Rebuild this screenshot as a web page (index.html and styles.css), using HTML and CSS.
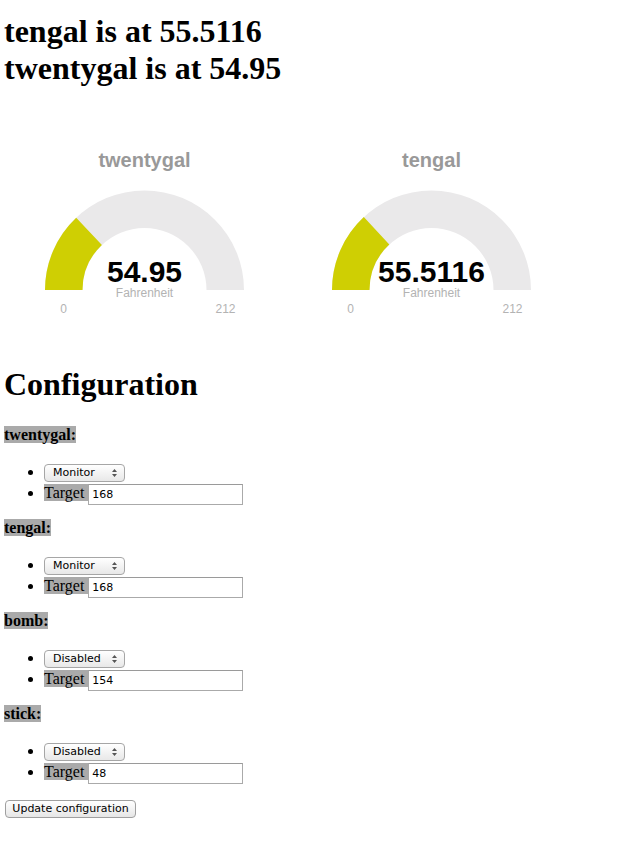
FILE: index.html
```html
<!DOCTYPE html>
<html>
<head>
<meta charset="utf-8">
<title>Temperatures</title>
<link rel="stylesheet" href="styles.css">
</head>
<body>
<div class="page">
  <h1 class="status">tengal is at 55.5116<br>twentygal is at 54.95</h1>

  <div class="gauges">
    <div class="gauge">
      <svg width="272" height="200" viewBox="0 0 272 200">
        <text class="g-title" x="136.5" y="37" text-anchor="middle">twentygal</text>
        <path class="g-back" d="M37 160 A99.5 99.5 0 0 1 236 160 L198.5 160 A62 62 0 0 0 74.5 160 Z"/>
        <path class="g-level" d="M37 160 A99.5 99.5 0 0 1 68.2 87.7 L93.9 114.9 A62 62 0 0 0 74.5 160 Z"/>
        <text class="g-value" x="136.5" y="152" text-anchor="middle">54.95</text>
        <text class="g-label" x="136.5" y="167" text-anchor="middle">Fahrenheit</text>
        <text class="g-minmax" x="55.5" y="183" text-anchor="middle">0</text>
        <text class="g-minmax" x="217.5" y="183" text-anchor="middle">212</text>
      </svg>
    </div>
    <div class="gauge">
      <svg width="272" height="200" viewBox="0 0 272 200">
        <text class="g-title" x="136.5" y="37" text-anchor="middle">tengal</text>
        <path class="g-back" d="M37 160 A99.5 99.5 0 0 1 236 160 L198.5 160 A62 62 0 0 0 74.5 160 Z"/>
        <path class="g-level" d="M37 160 A99.5 99.5 0 0 1 68.8 87.1 L94.3 114.6 A62 62 0 0 0 74.5 160 Z"/>
        <text class="g-value" x="136.5" y="152" text-anchor="middle">55.5116</text>
        <text class="g-label" x="136.5" y="167" text-anchor="middle">Fahrenheit</text>
        <text class="g-minmax" x="55.5" y="183" text-anchor="middle">0</text>
        <text class="g-minmax" x="217.5" y="183" text-anchor="middle">212</text>
      </svg>
    </div>
  </div>

  <h1 class="config-title">Configuration</h1>

  <form class="config">
    <div class="device">
      <div class="name"><b class="hl">twentygal:</b></div>
      <ul class="opts">
        <li class="opt-mode"><span class="sel"><select class="mode"><option>Monitor</option><option>Disabled</option></select><svg class="arrows" width="5" height="8" viewBox="0 0 5 8"><path d="M0 3 L2.5 0 L5 3 Z M0 5 L2.5 8 L5 5 Z"/></svg></span></li>
        <li class="opt-target"><label class="hl tlabel">Target</label><input class="target" type="text" value="168"></li>
      </ul>
    </div>
    <div class="device">
      <div class="name"><b class="hl">tengal:</b></div>
      <ul class="opts">
        <li class="opt-mode"><span class="sel"><select class="mode"><option>Monitor</option><option>Disabled</option></select><svg class="arrows" width="5" height="8" viewBox="0 0 5 8"><path d="M0 3 L2.5 0 L5 3 Z M0 5 L2.5 8 L5 5 Z"/></svg></span></li>
        <li class="opt-target"><label class="hl tlabel">Target</label><input class="target" type="text" value="168"></li>
      </ul>
    </div>
    <div class="device">
      <div class="name"><b class="hl">bomb:</b></div>
      <ul class="opts">
        <li class="opt-mode"><span class="sel"><select class="mode"><option>Disabled</option><option>Monitor</option></select><svg class="arrows" width="5" height="8" viewBox="0 0 5 8"><path d="M0 3 L2.5 0 L5 3 Z M0 5 L2.5 8 L5 5 Z"/></svg></span></li>
        <li class="opt-target"><label class="hl tlabel">Target</label><input class="target" type="text" value="154"></li>
      </ul>
    </div>
    <div class="device">
      <div class="name"><b class="hl">stick:</b></div>
      <ul class="opts">
        <li class="opt-mode"><span class="sel"><select class="mode"><option>Disabled</option><option>Monitor</option></select><svg class="arrows" width="5" height="8" viewBox="0 0 5 8"><path d="M0 3 L2.5 0 L5 3 Z M0 5 L2.5 8 L5 5 Z"/></svg></span></li>
        <li class="opt-target"><label class="hl tlabel">Target</label><input class="target" type="text" value="48"></li>
      </ul>
    </div>
    <div class="actions"><button class="update" type="button">Update configuration</button></div>
  </form>
</div>
</body>
</html>
```

FILE: styles.css
```css
html, body {
  margin: 0;
  padding: 0;
  background: #fff;
}
.page {
  padding: 8px 4px;
  font-family: "Liberation Serif", "Times New Roman", serif;
  font-size: 16px;
  color: #000;
}
.status {
  font-size: 32px;
  font-weight: bold;
  margin: 4.8px 0 0;
  line-height: 36.8px;
}
.gauges {
  display: flex;
  gap: 15px;
  margin-top: 43.6px;
  padding-left: 4px;
}
.gauge svg {
  display: block;
}
.g-title {
  font-family: "Liberation Sans", Arial, sans-serif;
  font-size: 20px;
  font-weight: bold;
  fill: #999999;
}
.g-back {
  fill: #eae9ea;
}
.g-level {
  fill: #cfcf03;
}
.g-value {
  font-family: "Liberation Sans", Arial, sans-serif;
  font-size: 30px;
  font-weight: bold;
  fill: #010101;
}
.g-label, .g-minmax {
  font-family: "Liberation Sans", Arial, sans-serif;
  font-size: 12px;
  fill: #b3b3b3;
}
.config-title {
  font-size: 32px;
  font-weight: bold;
  line-height: 36.8px;
  margin: 35.8px 0 23.4px;
}
.config {
  margin: 0;
}
.name {
  line-height: 18px;
  height: 18px;
}
.hl {
  background: #aaaaaa;
}
.opts {
  list-style: disc;
  margin: 18px 0 15px;
  padding-left: 40px;
}
.opt-mode {
  height: 20px;
  line-height: 20px;
}
.opt-target {
  height: 22px;
  line-height: 22px;
}
.sel {
  position: relative;
  display: inline-block;
  vertical-align: middle;
  height: 18px;
}
.mode {
  -webkit-appearance: none;
  appearance: none;
  box-sizing: border-box;
  width: 81px;
  height: 18px;
  margin: 0;
  padding: 0 0 0 8px;
  border: 1px solid #a6a6a6;
  border-radius: 4px;
  background: linear-gradient(#ffffff, #f1f1f1 60%, #e8e8e8);
  font-family: "DejaVu Sans", "Lucida Grande", sans-serif;
  font-size: 11px;
  line-height: 16px;
  color: #000;
  display: block;
}
.arrows {
  position: absolute;
  right: 8px;
  top: 5px;
  fill: #555;
  pointer-events: none;
}
.tlabel {
  padding-right: 4px;
}
.target {
  box-sizing: border-box;
  width: 155px;
  height: 21px;
  margin: 0;
  padding: 0 3px;
  border: 1px solid #aaaaaa;
  border-top-color: #9a9a9a;
  font-family: "DejaVu Sans", "Lucida Grande", sans-serif;
  font-size: 11px;
  color: #000;
  background: #fff;
  vertical-align: baseline;
}
.actions {
  margin-top: 3px;
}
.update {
  box-sizing: border-box;
  width: 131px;
  height: 18px;
  margin: 2px 0 0 1px;
  padding: 0;
  border: 1px solid #9f9f9f;
  border-radius: 4px;
  background: linear-gradient(#ffffff, #f0f0f0 60%, #e6e6e6);
  font-family: "DejaVu Sans", "Lucida Grande", sans-serif;
  font-size: 11px;
  line-height: 16px;
  color: #000;
}
```
